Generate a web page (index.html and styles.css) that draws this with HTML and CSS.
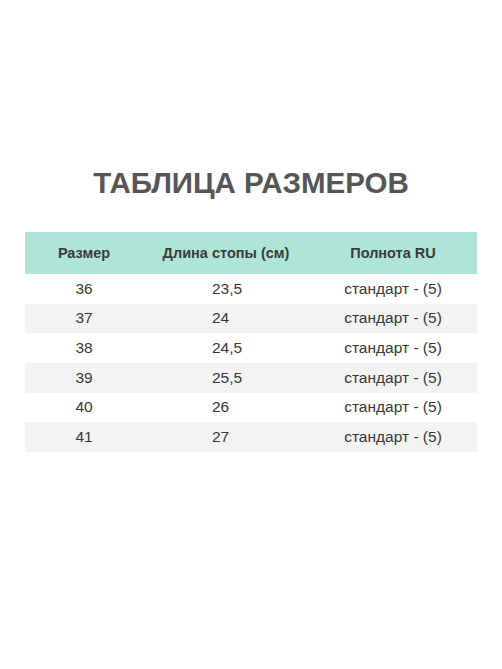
FILE: index.html
```html
<!DOCTYPE html>
<html lang="ru">
<head>
<meta charset="utf-8">
<title>Таблица размеров</title>
<link rel="stylesheet" href="styles.css">
</head>
<body>
<main class="page">
  <h1 class="title">ТАБЛИЦА РАЗМЕРОВ</h1>
  <div class="table">
    <div class="row head">
      <div class="cell c1">Размер</div>
      <div class="cell c2">Длина стопы (см)</div>
      <div class="cell c3">Полнота RU</div>
    </div>
    <div class="row">
      <div class="cell c1">36</div>
      <div class="cell c2 d">23,5</div>
      <div class="cell c3">стандарт - (5)</div>
    </div>
    <div class="row alt">
      <div class="cell c1">37</div>
      <div class="cell c2 d">24</div>
      <div class="cell c3">стандарт - (5)</div>
    </div>
    <div class="row">
      <div class="cell c1">38</div>
      <div class="cell c2 d">24,5</div>
      <div class="cell c3">стандарт - (5)</div>
    </div>
    <div class="row alt">
      <div class="cell c1">39</div>
      <div class="cell c2 d">25,5</div>
      <div class="cell c3">стандарт - (5)</div>
    </div>
    <div class="row">
      <div class="cell c1">40</div>
      <div class="cell c2 d">26</div>
      <div class="cell c3">стандарт - (5)</div>
    </div>
    <div class="row alt">
      <div class="cell c1">41</div>
      <div class="cell c2 d">27</div>
      <div class="cell c3">стандарт - (5)</div>
    </div>
  </div>
</main>
</body>
</html>
```

FILE: styles.css
```css
html, body {
  margin: 0;
  padding: 0;
  background: #ffffff;
}

body {
  width: 502px;
  height: 669px;
  font-family: "Liberation Sans", Arial, sans-serif;
  color: #383838;
}

.page {
  padding: 166px 25px 0 25px;
}

.title {
  margin: 0;
  font-size: 29.5px;
  line-height: 34px;
  font-weight: 700;
  color: #565656;
  text-align: center;
  letter-spacing: 0;
}

.table {
  margin-top: 32px;
  width: 452px;
}

.row {
  display: grid;
  grid-template-columns: 118px 166px 1fr;
  height: 29.67px;
  align-items: center;
}

.row.head {
  height: 42px;
  background: #afe5d6;
}

.row.alt {
  background: #f3f3f3;
}

.cell {
  font-size: 15.5px;
  line-height: 18px;
  text-align: center;
  white-space: nowrap;
}

.head .cell {
  font-size: 14.5px;
  font-weight: 700;
  color: #3b3b3b;
}

.cell.d {
  text-align: left;
  padding-left: 69px;
}
```
